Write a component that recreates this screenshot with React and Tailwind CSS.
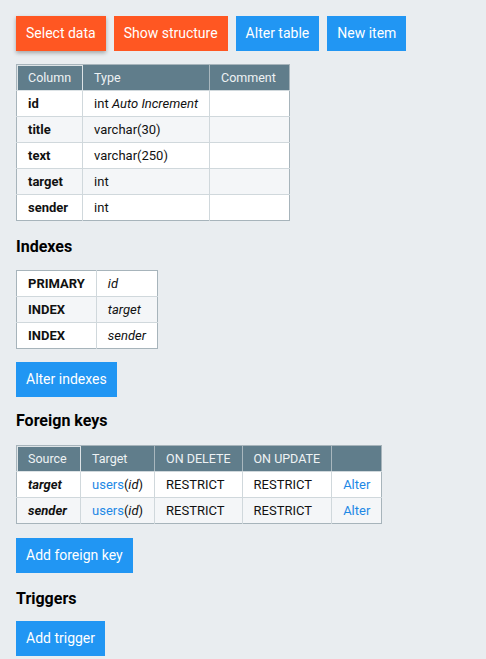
import React from 'react';

const columns = [
  { name: 'id', type: 'int', extra: 'Auto Increment' },
  { name: 'title', type: 'varchar(30)' },
  { name: 'text', type: 'varchar(250)' },
  { name: 'target', type: 'int' },
  { name: 'sender', type: 'int' },
];

const indexes = [
  ['PRIMARY', 'id'],
  ['INDEX', 'target'],
  ['INDEX', 'sender'],
];

const foreignKeys = [
  { source: 'target', table: 'users', col: 'id' },
  { source: 'sender', table: 'users', col: 'id' },
];

// border classes per cell so the outer edge keeps the darker table border
function cellBorder(ci, cols, ri, rows) {
  let c = '';
  if (ci < cols - 1) c += ' border-r border-r-[#d0d8dc]';
  if (ri < rows - 1) c += ' border-b border-b-[#d0d8dc]';
  return c;
}

function Th({ children, first, last, className = '' }) {
  return (
    <th
      className={
        'bg-[#607d8b] text-[#eef2f4] font-normal text-left px-[11px] py-[5px] text-[12.5px] leading-[15px] whitespace-nowrap border-b border-b-[#d0d8dc] ' +
        className +
        (first ? ' outline outline-1 -outline-offset-1 outline-[#dde3e6]' : '') +
        (last ? '' : ' border-r border-r-[#a9b7be]')
      }
    >
      {children}
    </th>
  );
}

function Button({ children, orange, active }) {
  return (
    <button
      className={
        'h-[35px] px-[10px] text-[14px] text-white ' +
        (orange ? 'bg-[#ff5722] ' : 'bg-[#2196f3] ') +
        (active ? 'shadow-[0_2px_4px_rgba(0,0,0,0.3)]' : '')
      }
    >
      {children}
    </button>
  );
}

function Heading({ children, className }) {
  return <h3 className={'text-[16px] leading-[20px] font-bold text-black ' + className}>{children}</h3>;
}

export default function App() {
  return (
    <div className="min-h-screen bg-[#e9edf0] px-4 pt-4 pb-2 text-[#111] font-['Roboto',sans-serif]">
      <div className="flex gap-2">
        <Button orange active>Select data</Button>
        <Button orange>Show structure</Button>
        <Button>Alter table</Button>
        <Button>New item</Button>
      </div>

      <table className="mt-[13px] border-collapse border border-[#a7b4bb]">
        <thead>
          <tr>
            <Th first>Column</Th>
            <Th>Type</Th>
            <Th last className="min-w-[80px]">Comment</Th>
          </tr>
        </thead>
        <tbody>
          {columns.map((c, ri) => (
            <tr key={c.name} className={ri % 2 ? 'bg-[#f4f6f8]' : 'bg-white'}>
              <td className={'px-[11px] py-[5px] text-[13px] leading-[15px] font-bold' + cellBorder(0, 3, ri, columns.length)}>{c.name}</td>
              <td className={'px-[11px] py-[5px] text-[13px] leading-[15px] whitespace-nowrap' + cellBorder(1, 3, ri, columns.length)}>
                {c.type}
                {c.extra && <> <i>{c.extra}</i></>}
              </td>
              <td className={'px-[11px] py-[5px] text-[13px] leading-[15px]' + cellBorder(2, 3, ri, columns.length)}></td>
            </tr>
          ))}
        </tbody>
      </table>

      <Heading className="mt-4 mb-[13px]">Indexes</Heading>
      <table className="border-collapse border border-[#a7b4bb]">
        <tbody>
          {indexes.map(([kind, col], ri) => (
            <tr key={ri} className={ri % 2 ? 'bg-[#f4f6f8]' : 'bg-white'}>
              <td className={'px-[11px] py-[5px] text-[13px] leading-[15px] font-bold' + cellBorder(0, 2, ri, indexes.length)}>{kind}</td>
              <td className={'px-[11px] py-[5px] text-[13px] leading-[15px] italic' + cellBorder(1, 2, ri, indexes.length)}>{col}</td>
            </tr>
          ))}
        </tbody>
      </table>
      <div className="mt-[13px]">
        <Button>Alter indexes</Button>
      </div>

      <Heading className="mt-[14px] mb-[14px]">Foreign keys</Heading>
      <table className="border-collapse border border-[#a7b4bb]">
        <thead>
          <tr>
            <Th first className="min-w-[64px]">Source</Th>
            <Th>Target</Th>
            <Th>ON DELETE</Th>
            <Th>ON UPDATE</Th>
            <Th last></Th>
          </tr>
        </thead>
        <tbody>
          {foreignKeys.map((fk, ri) => (
            <tr key={fk.source} className={ri % 2 ? 'bg-[#f4f6f8]' : 'bg-white'}>
              <td className={'px-[11px] py-[5px] text-[13px] leading-[15px] font-bold italic' + cellBorder(0, 5, ri, 2)}>{fk.source}</td>
              <td className={'px-[11px] py-[5px] text-[13px] leading-[15px] whitespace-nowrap' + cellBorder(1, 5, ri, 2)}>
                <a href="#" className="text-[#1e88e5]">{fk.table}</a>(<i>{fk.col}</i>)
              </td>
              <td className={'px-[11px] py-[5px] text-[13px] leading-[15px]' + cellBorder(2, 5, ri, 2)}>RESTRICT</td>
              <td className={'px-[11px] py-[5px] text-[13px] leading-[15px]' + cellBorder(3, 5, ri, 2)}>RESTRICT</td>
              <td className={'px-[11px] py-[5px] text-[13px] leading-[15px]' + cellBorder(4, 5, ri, 2)}>
                <a href="#" className="text-[#1e88e5]">Alter</a>
              </td>
            </tr>
          ))}
        </tbody>
      </table>
      <div className="mt-[14px]">
        <Button>Add foreign key</Button>
      </div>

      <Heading className="mt-[16px] mb-3">Triggers</Heading>
      <Button>Add trigger</Button>
    </div>
  );
}
